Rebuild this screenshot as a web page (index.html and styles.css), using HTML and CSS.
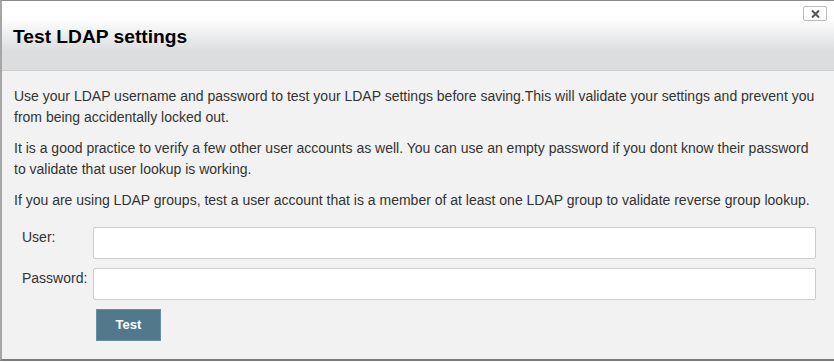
FILE: index.html
```html
<!DOCTYPE html>
<html lang="en">
<head>
  <meta charset="UTF-8">
  <meta name="viewport" content="width=device-width, initial-scale=1.0">
  <title>Test LDAP settings</title>
  <link rel="stylesheet" href="styles.css">
</head>
<body>
  <!-- Ventana de prueba LDAP -->
  <div class="dialog">
    <div class="dialog-header">
      <h2 class="dialog-title">Test LDAP settings</h2>
      <button class="dialog-close" title="Close">
        <svg width="9" height="8" viewBox="0 0 9 8">
          <path d="M1 0.5 L8 7.5 M8 0.5 L1 7.5" stroke="#555" stroke-width="2" fill="none"/>
        </svg>
      </button>
    </div>

    <div class="dialog-body">
      <p>Use your LDAP username and password to test your LDAP settings before saving.This will validate your settings and prevent you from being accidentally locked out.</p>
      <p>It is a good practice to verify a few other user accounts as well. You can use an empty password if you dont know their password to validate that user lookup is working.</p>
      <p>If you are using LDAP groups, test a user account that is a member of at least one LDAP group to validate reverse group lookup.</p>

      <div class="test-form">
        <label class="form-label" for="ldap-user">User:</label>
        <input class="form-input" type="text" id="ldap-user">
        <label class="form-label" for="ldap-password">Password:</label>
        <input class="form-input" type="password" id="ldap-password">
        <span></span>
        <button class="test-button">Test</button>
      </div>
    </div>
  </div>
</body>
</html>
```

FILE: styles.css
```css
/* Página */
body {
  margin: 0;
  font-family: "Liberation Sans", Arial, sans-serif;
  color: #333;
  overflow: hidden;
}

/* Ventana */
.dialog {
  border-top: 1px solid #8a8a8a;
  border-left: 2px solid #a6a6a6;
  border-bottom: 2px solid #7a7a7a;
  background: #f2f2f2;
}

/* Encabezado */
.dialog-header {
  position: relative;
  height: 70px;
  box-sizing: border-box;
  padding: 25px 13px 0 11px;
  background: linear-gradient(to bottom, #ffffff 0px, #ffffff 17px, #dcdddf 50px, #dcdddf 70px);
  border-bottom: 1px solid #cccccc;
}
.dialog-title {
  margin: 0;
  font-size: 19.2px;
  font-weight: bold;
  color: #000;
  line-height: 22px;
}
.dialog-close {
  position: absolute;
  top: 5px;
  right: 7px;
  width: 24px;
  height: 15px;
  padding: 0;
  border: 1px solid #bbbbbb;
  border-radius: 2px;
  background: transparent;
  display: flex;
  align-items: center;
  justify-content: center;
  cursor: pointer;
}

/* Contenido */
.dialog-body {
  height: 288px;
  box-sizing: border-box;
  padding: 15px 15px 0 12px;
  font-size: 14px;
  line-height: 20.5px;
}
.dialog-body p {
  margin: 0 0 11px;
}

/* Formulario */
.test-form {
  display: grid;
  grid-template-columns: 71px 1fr;
  row-gap: 9px;
  padding: 5px 3px 0 8px;
}
.form-label {
  font-size: 14px;
  line-height: 20.5px;
  color: #333;
}
.form-input {
  height: 32px;
  box-sizing: border-box;
  border: 1px solid #cccccc;
  border-radius: 2px;
  background: #ffffff;
  padding: 0 8px;
  font-size: 14px;
  outline: none;
}
.test-button {
  margin-left: 3px;
  width: 65px;
  height: 32px;
  border: 1px solid #6a8e9f;
  background: #52798b;
  color: #ffffff;
  font-family: "Liberation Sans", Arial, sans-serif;
  font-size: 13px;
  font-weight: bold;
  cursor: pointer;
}
```
